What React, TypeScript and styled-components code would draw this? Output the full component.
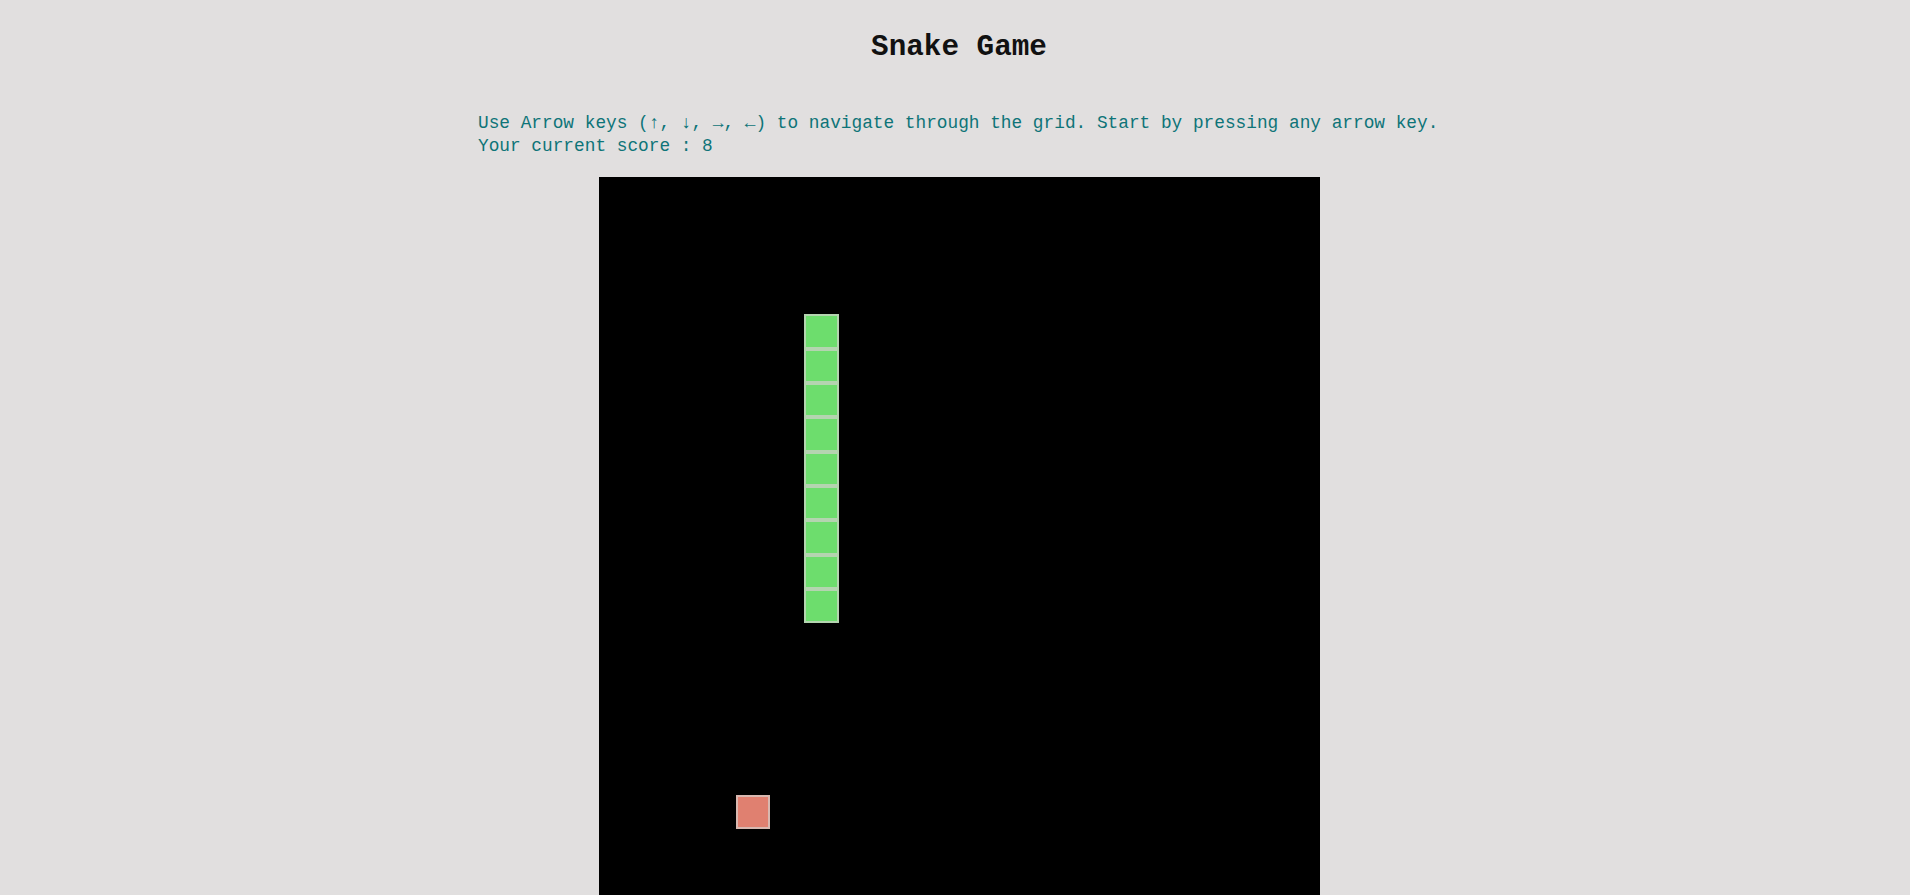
import styled, { createGlobalStyle } from "styled-components";

const GlobalStyle = createGlobalStyle`
    html, body {
        margin: 0;
        padding: 0;
        background-color: #e1dfdf;
    }
    body {
        font-family: "Liberation Mono", "DejaVu Sans Mono", monospace;
    }
`;

const GRID_SIZE = 21;

const Page = styled.div`
    padding-left: 8px;
    display: flex;
    flex-direction: column;
    align-items: center;
`;

const Title = styled.h1`
    margin: 30px 0 0;
    font-size: 29.3px;
    line-height: 36px;
    font-weight: bold;
    color: #111111;
`;

const Instructions = styled.div`
    width: 962px;
    margin-top: 46px;
    font-size: 17.8px;
    line-height: 23px;
    color: #0e7478;
`;

const Board = styled.div`
    margin-top: 19px;
    width: 721px;
    height: 721px;
    flex-shrink: 0;
    background-color: #000;
    display: grid;
    grid-template-columns: repeat(${GRID_SIZE}, 1fr);
    grid-template-rows: repeat(${GRID_SIZE}, 1fr);
`;

const Cell = styled.div<{ $kind: "snake" | "food"; $x: number; $y: number }>`
    box-sizing: border-box;
    grid-column: ${p => p.$x + 1};
    grid-row: ${p => p.$y + 1};
    background-color: ${p => (p.$kind === "snake" ? "#6ddd6d" : "#e08070")};
    border: 2px solid ${p => (p.$kind === "snake" ? "#b4d4b0" : "#d8b8b0")};
`;

// snake body going down column 6, from row 4 to row 12
const snake = Array.from({ length: 9 }, (_, i) => ({ x: 6, y: 4 + i }));
const food = { x: 4, y: 18 };
const score = 8;

function App() {
    return (
        <>
            <GlobalStyle />
            <Page>
                <Title>Snake Game</Title>
                <Instructions>
                    Use Arrow keys (↑, ↓, →, ←) to navigate through the grid. Start by pressing any arrow key.
                    <br />
                    Your current score : {score}
                </Instructions>
                <Board>
                    {snake.map((s, i) => (
                        <Cell key={i} $kind="snake" $x={s.x} $y={s.y} />
                    ))}
                    <Cell $kind="food" $x={food.x} $y={food.y} />
                </Board>
            </Page>
        </>
    );
}

export default App;
